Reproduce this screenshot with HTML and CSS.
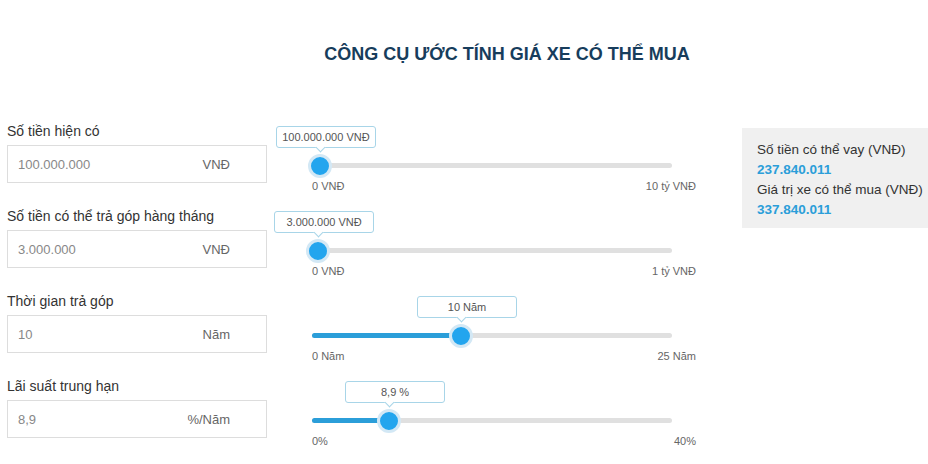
FILE: index.html
```html
<!DOCTYPE html>
<html lang="vi">
<head>
  <meta charset="UTF-8">
  <title>Công cụ ước tính giá xe có thể mua</title>
  <link rel="stylesheet" href="styles.css">
</head>
<body>

  <h1 class="title">CÔNG CỤ ƯỚC TÍNH GIÁ XE CÓ THỂ MUA</h1>

  <div class="calc">
    <div class="rows">

      <div class="row">
        <div class="field">
          <label class="field-label">Số tiền hiện có</label>
          <div class="input-box">
            <span class="input-value">100.000.000</span>
            <span class="input-unit">VNĐ</span>
          </div>
        </div>
        <div class="slider">
          <div class="track">
            <div class="fill" style="width: 2.2%"></div>
            <div class="thumb" style="left: 2.2%"></div>
            <div class="tip" style="left: 2.2%">100.000.000 VNĐ</div>
          </div>
          <div class="range-labels"><span>0 VNĐ</span><span>10 tỷ VNĐ</span></div>
        </div>
      </div>

      <div class="row">
        <div class="field">
          <label class="field-label">Số tiền có thể trả góp hàng tháng</label>
          <div class="input-box">
            <span class="input-value">3.000.000</span>
            <span class="input-unit">VNĐ</span>
          </div>
        </div>
        <div class="slider">
          <div class="track">
            <div class="fill" style="width: 1.7%"></div>
            <div class="thumb" style="left: 1.7%"></div>
            <div class="tip" style="left: 1.7%">3.000.000 VNĐ</div>
          </div>
          <div class="range-labels"><span>0 VNĐ</span><span>1 tỷ VNĐ</span></div>
        </div>
      </div>

      <div class="row">
        <div class="field">
          <label class="field-label">Thời gian trả góp</label>
          <div class="input-box">
            <span class="input-value">10</span>
            <span class="input-unit">Năm</span>
          </div>
        </div>
        <div class="slider">
          <div class="track">
            <div class="fill" style="width: 41.4%"></div>
            <div class="thumb" style="left: 41.4%"></div>
            <div class="tip" style="left: 41.4%">10 Năm</div>
          </div>
          <div class="range-labels"><span>0 Năm</span><span>25 Năm</span></div>
        </div>
      </div>

      <div class="row">
        <div class="field">
          <label class="field-label">Lãi suất trung hạn</label>
          <div class="input-box">
            <span class="input-value">8,9</span>
            <span class="input-unit">%/Năm</span>
          </div>
        </div>
        <div class="slider">
          <div class="track">
            <div class="fill" style="width: 21.4%"></div>
            <div class="thumb" style="left: 21.4%"></div>
            <div class="tip" style="left: 21.4%">8,9 %</div>
          </div>
          <div class="range-labels"><span>0%</span><span>40%</span></div>
        </div>
      </div>

    </div>

    <div class="result">
      <div class="result-label">Số tiền có thể vay (VNĐ)</div>
      <div class="result-value">237.840.011</div>
      <div class="result-label">Giá trị xe có thể mua (VNĐ)</div>
      <div class="result-value">337.840.011</div>
    </div>
  </div>

</body>
</html>
```

FILE: styles.css
```css
body {
  margin: 0;
  font-family: "Liberation Sans", Arial, sans-serif;
  background-color: #fff;
  color: #333;
  overflow: hidden;
}
.title {
  margin: 0;
  padding: 43px 0 0 86px;
  height: 122px;
  box-sizing: border-box;
  text-align: center;
  font-size: 18px;
  line-height: 22px;
  font-weight: bold;
  color: #173d5c;
}
.calc {
  display: flex;
  align-items: flex-start;
}
.rows {
  padding-left: 7px;
}
.row {
  display: flex;
  height: 85px;
}
.field {
  width: 260px;
}
.field-label {
  display: block;
  font-size: 14px;
  line-height: 18px;
  color: #333;
}
.input-box {
  margin-top: 5px;
  height: 38px;
  box-sizing: border-box;
  border: 1px solid #ddd;
  display: flex;
  align-items: center;
  justify-content: space-between;
  padding: 0 36px 0 10px;
  font-size: 13px;
}
.input-value {
  color: #888;
}
.input-unit {
  color: #666;
}
.slider {
  margin-left: 45px;
  width: 384px;
}
.track {
  position: relative;
  margin-top: 41px;
  width: 360px;
  height: 5px;
  border-radius: 3px;
  background-color: #e0e0e0;
}
.fill {
  height: 100%;
  border-radius: 3px;
  background-color: #2b9ed9;
}
.thumb {
  position: absolute;
  top: 50%;
  width: 18px;
  height: 18px;
  border-radius: 50%;
  background-color: #23a5ee;
  border: 3px solid #d3e8f5;
  transform: translate(-50%, -50%);
}
.tip {
  position: absolute;
  bottom: 20px;
  width: 98px;
  height: 20px;
  margin-left: -44px;
  border: 1px solid #a8d5e8;
  border-radius: 3px;
  background-color: #fff;
  font-size: 11px;
  line-height: 20px;
  text-align: center;
  color: #555;
}
.tip::after {
  content: "";
  position: absolute;
  left: 40px;
  bottom: -4px;
  width: 6px;
  height: 6px;
  background-color: #fff;
  border-right: 1px solid #a8d5e8;
  border-bottom: 1px solid #a8d5e8;
  transform: rotate(45deg);
}
.range-labels {
  display: flex;
  justify-content: space-between;
  margin-top: 12px;
  font-size: 11px;
  line-height: 13px;
  color: #666;
}
.result {
  margin: 6px 0 0 46px;
  width: 200px;
  flex-shrink: 0;
  padding: 12px 0 8px 15px;
  background-color: #f0f0f0;
  font-size: 13.5px;
  line-height: 20px;
}
.result-label {
  color: #333;
  white-space: nowrap;
}
.result-value {
  font-weight: bold;
  color: #2b9ed9;
}
```
